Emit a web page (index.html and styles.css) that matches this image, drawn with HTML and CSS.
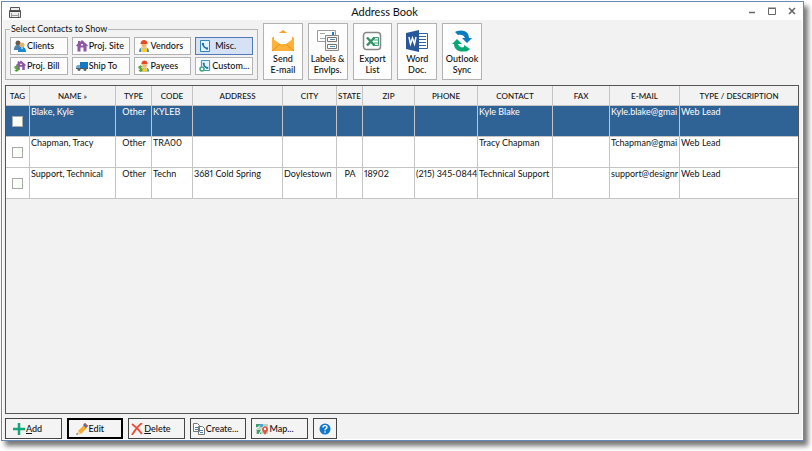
FILE: index.html
```html
<!DOCTYPE html>
<html lang="en">
<head>
<meta charset="utf-8">
<title>Address Book</title>
<link rel="stylesheet" href="styles.css">
</head>
<body>
<svg class="defs" aria-hidden="true">
  <symbol id="house" viewBox="0 0 12 12"><path fill="#8e56a3" d="M6 0 12 5.500 11 6.500 10.500 6v5.500h-3V7.500h-3v4h-3V6L1 6.500 0 5.500l2-2V1h2v1z"/><path fill="#fff" d="M5 4h2v1.500H5z"/></symbol>
  <symbol id="person" viewBox="0 0 12 12"><path fill="#e64b25" d="M2.500 4C2.500 1.500 4 0 6 0s3.500 1.500 3.500 4z"/><path fill="#f8b56c" d="M3.500 4h5v1.500C8.500 7 7 8 6 8S3.500 7 3.500 5.500z"/><path fill="#3d8bd0" d="M1 12c0-3 1-4 3-4.500L6 9l2-1.500C10 8 11 9 11 12z"/><path fill="#ffd027" d="M4 7.500 6 9.500 8 7.500 9 8v4H3V8z"/></symbol>
  <symbol id="phonebook" viewBox="0 0 12 12"><path fill="#e0f1fb" stroke="#3387b5" d="M1.500.5h9v11h-9z"/><path fill="none" stroke="#246da3" stroke-width="1.600" d="M4 4c0 2 2 4.500 4.500 4.500"/><path fill="#246da3" d="M3 3h2v2H3zM7 7.500h2v2H7z"/></symbol>
  <symbol id="dollar" viewBox="0 0 6 8"><path fill="none" stroke="#55a33a" stroke-width="1.500" d="M5 2C3.500 1 1 1.200 1 2.700S5 4 5 5.500 2.500 7 1 6M3 0v8"/></symbol>
</svg>
<main class="window">
  <header class="titlebar">
    <svg class="app-icon" viewBox="0 0 12 11"><path fill="#eee" stroke="#555" d="M1.500.5h9v3h-9zM.5 3.500h11v7H.5z"/><path stroke="#444" d="M1 4.500h10"/><path stroke="#999" d="M2.500 8.500h7M2.500 6v4M9.500 6v4"/></svg>
    <h1>Address Book</h1>
    <nav class="controls" aria-label="Window">
      <button aria-label="Minimize"><svg viewBox="0 0 8 8"><path d="M1 5.500h6" stroke="#666" stroke-width="1.500"/></svg></button>
      <button aria-label="Maximize"><svg viewBox="0 0 8 8"><path d="M.5 1.500h7v6h-7zM0 1h8" fill="none" stroke="#666"/></svg></button>
      <button aria-label="Close"><svg viewBox="0 0 8 8"><path d="m1 1 6 6M7 1 1 7" stroke="#666" stroke-width="1.600"/></svg></button>
    </nav>
  </header>
  <div class="content">
    <section class="toolbar">
      <fieldset>
        <legend>Select Contacts to Show</legend>
        <div class="filters">
          <button><svg viewBox="0 0 12 12"><circle cx="4" cy="3" r="2.500" fill="#685b4b"/><path fill="#4e80ac" d="M0 10c0-4 1.500-5 4-5s4 1 4 5z"/><circle cx="8" cy="5" r="2.500" fill="#e2b463"/><path fill="#1989d1" d="M4 12c0-4 2-5 4-5s4 1 4 5z"/><path fill="#fff" d="m7 7.500 1 2 1-2z"/></svg>Clients</button>
          <button><svg><use href="#house"/></svg>Proj. Site</button>
          <button><svg><use href="#person"/></svg>Vendors</button>
          <button class="active"><svg><use href="#phonebook"/></svg>Misc.</button>
          <button><svg viewBox="0 0 12 12"><use href="#house" x="2" width="10" height="11"/><use href="#dollar" y="5" width="5" height="7"/></svg>Proj. Bill</button>
          <button><svg viewBox="0 0 12 12"><path fill="#1479be" d="M4 2h8v6H4z"/><path fill="#77a8cc" d="M1 5h3v4H0V7z"/><path fill="#4c5963" d="M0 8h12v1H0z"/><circle cx="3" cy="9.500" r="1.500" fill="#566"/><circle cx="9" cy="9.500" r="1.500" fill="#566"/></svg>Ship To</button>
          <button><svg viewBox="0 0 12 12"><use href="#person" x="1" width="11" height="12"/><use href="#dollar" y="5" width="5" height="7"/></svg>Payees</button>
          <button><svg viewBox="0 0 12 12"><use href="#phonebook" x="1" width="11" height="11"/><circle cx="3" cy="9" r="2" fill="#fff" stroke="#3aa783" stroke-width="1.500"/></svg>Custom...</button>
        </div>
      </fieldset>
      <div class="actions">
        <button><svg viewBox="0 0 24 24"><path fill="#f3a32b" d="M1 9 12 1l11 8v13H1z"/><path fill="#fff" d="M3 4h18v8l-5 4H8l-5-4z"/><path fill="#ffb13a" d="m1 9 8 6h6l8-6v13H1z"/><path stroke="#e78f16" d="m1 22 8-7M23 22l-8-7"/></svg><span>Send<br>E-mail</span></button>
        <button><svg viewBox="0 0 24 24"><path fill="#fff" stroke="#999" d="M1.500 1.500h18v11h-18z"/><path stroke="#aaa" d="M4 4.500h5M4 9.500h5"/><path fill="#2878bd" d="M16 3h2v3h-2z"/><path fill="#f5f5f5" stroke="#888" d="M9.500 6.500h13v15h-13z"/><path fill="#fff" stroke="#777" d="M11.500 8.500h9v4h-9zM11.500 15.500h9v4h-9z"/><path stroke="#4e88bb" d="M14 10.500h5M14 17.500h5"/></svg><span>Labels &amp;<br>Envlps.</span></button>
        <button><svg viewBox="0 0 24 24"><rect x="3.500" y="3.500" width="17" height="17" rx="3" fill="#fff" stroke="#888" stroke-width="1.500"/><path fill="none" stroke="#38a274" d="M13 8.500h5.500v8H13M14 11h5M14 14h5"/><path stroke="#319366" stroke-width="2.500" d="m7 8.500 7.500 8M14.500 8.500l-7.500 8"/></svg><span>Export<br>List</span></button>
        <button><svg viewBox="0 0 24 24"><path fill="#fff" stroke="#3260a3" d="M12.500 4.500h10v15h-10z"/><path stroke="#3260a3" d="M14 7.500h7M14 10.500h7M14 13.500h7M14 16.500h7"/><path fill="#28569a" d="M1 4 14 1v22L1 20z"/><path fill="none" stroke="#fff" stroke-width="1.500" d="m4 8 1.500 7L7.500 9l2 6L11 8"/></svg><span>Word<br>Doc.</span></button>
        <button><svg viewBox="0 0 24 24"><path fill="#087bc1" d="M7 2c7-2 12 1 12 7h3l-5 5-5-5h3c-1-3-4-4-7-3L5 3z"/><path fill="#08a875" d="M17 22C10 24 4 21 4 15H2l5-5 5 5H8c1 3 4 4 6 3v-2l6 4-5 4z"/></svg><span>Outlook<br>Sync</span></button>
      </div>
    </section>
    <section class="grid">
      <table>
        <colgroup><col class="w-tag"><col class="w-name"><col class="w-type"><col class="w-code"><col class="w-address"><col class="w-city"><col class="w-state"><col class="w-zip"><col class="w-phone"><col class="w-contact"><col class="w-fax"><col class="w-email"><col></colgroup>
        <thead><tr><th>TAG</th><th>NAME »</th><th>TYPE</th><th>CODE</th><th>ADDRESS</th><th>CITY</th><th>STATE</th><th>ZIP</th><th>PHONE</th><th>CONTACT</th><th>FAX</th><th>E-MAIL</th><th>TYPE / DESCRIPTION</th></tr></thead>
        <tbody>
          <tr class="selected"><td class="tag"><input type="checkbox" aria-label="Tag Blake, Kyle"></td><td>Blake, Kyle</td><td class="mid">Other</td><td>KYLEB</td><td></td><td></td><td></td><td></td><td></td><td>Kyle Blake</td><td></td><td>Kyle.blake@gmai</td><td>Web Lead</td></tr>
          <tr><td class="tag"><input type="checkbox" aria-label="Tag Chapman, Tracy"></td><td>Chapman, Tracy</td><td class="mid">Other</td><td>TRA00</td><td></td><td></td><td></td><td></td><td></td><td>Tracy Chapman</td><td></td><td>Tchapman@gmai</td><td>Web Lead</td></tr>
          <tr><td class="tag"><input type="checkbox" aria-label="Tag Support, Technical"></td><td>Support, Technical</td><td class="mid">Other</td><td>Techn</td><td>3681 Cold Spring</td><td>Doylestown</td><td class="mid">PA</td><td>18902</td><td>(215) 345-0844</td><td>Technical Support</td><td></td><td>support@designr</td><td>Web Lead</td></tr>
        </tbody>
      </table>
    </section>
    <footer>
      <div class="commands">
        <button class="roomy"><svg viewBox="0 0 12 12"><path stroke="#13a67a" stroke-width="2.500" d="M6 0v12M0 6h12"/></svg><span><u>A</u>dd</span></button>
        <button class="roomy default"><svg viewBox="0 0 12 12"><path fill="#f4aa33" d="m2 8 6-6 3 3-6 6z"/><path fill="#2d75bd" d="m7 2 2-2 3 3-2 2z"/><path fill="#e34c34" d="m8 1 1-1 3 3-1 1z"/><path fill="#efcf9c" d="m2 8 3 3-4 1z"/><path fill="#444" d="m1 10 1 1-2 1z"/></svg><span>Edit</span></button>
        <button><svg viewBox="0 0 12 12"><path fill="none" stroke="#ed4b31" stroke-width="1.800" d="M1 1c3 2 7 6 10 10M11 0C7 3 4 7 1 12"/></svg><span><u>D</u>elete</span></button>
        <button><svg viewBox="0 0 12 12"><path fill="#fff" stroke="#777" d="M.5.5h4l2 2v6h-6zM5.500 3.500h4l2 2v6h-6z"/><path stroke="#3f82bd" d="M2 4.500h3M2 6.500h3M7 7.500h3M7 9.500h3"/></svg><span>Create...</span></button>
        <button class="mapping"><svg viewBox="0 0 12 12"><path fill="#b9d6c0" d="M0 1h12v10H0z"/><path fill="#3f9e70" d="M0 1h4v3H0zM1 7h4v4H1z"/><path stroke="#fff" d="m0 6 6-5M3 11l5-8"/><path fill="#55a5d4" d="M4 1h3v3H4z"/><path fill="#e8523a" d="M9 12 6 7c0-5 6-5 6 0z"/><circle cx="9" cy="6" r="1.200" fill="#fff"/></svg><span>Map...</span></button>
      </div>
      <button class="help" aria-label="Help"><svg viewBox="0 0 12 12"><circle cx="6" cy="6" r="5.500" fill="#1177cc"/><path fill="none" stroke="#fff" stroke-width="1.400" d="M4 4.500C4 2 8 2 8 4.300 8 5.500 6 5.500 6 7.200M6 8.300v1.400"/></svg></button>
    </footer>
  </div>
</main>
</body>
</html>
```
FILE: styles.css
```css
* { box-sizing: border-box; }
body {
  margin: 0;
  padding: 1px 8px 10px 1px;
  min-height: 100vh;
  display: flex;
  background: #fff;
  color: #111;
  font: 9px/12px Lato, sans-serif;
}
.defs { position: absolute; width: 0; height: 0; }
button {
  margin: 0;
  padding: 0;
  font: inherit;
  font-weight: 500;
  color: inherit;
  border: 1px solid #b2b2b2;
  background: #fdfdfd;
}
.window {
  flex: 1;
  min-width: 0;
  display: flex;
  flex-direction: column;
  border: 1px solid #6688bb;
  background: #fff;
  box-shadow: 4px 5px 5px #777;
}
.titlebar {
  height: 18px;
  display: grid;
  grid-template-columns: 1fr auto 1fr;
  align-items: center;
  padding: 0 7px 0 7px;
}
.titlebar h1 {
  margin: 0;
  padding: 2px 36px 0 0;
  font: 11px/16px Lato, sans-serif;
}
.app-icon { width: 12px; height: 11px; margin-top: 2px; }
.controls { display: flex; justify-content: flex-end; gap: 12px; }
.controls button { display: flex; border: 0; background: none; }
.controls svg { width: 8px; height: 8px; }
.content {
  flex: 1;
  display: flex;
  flex-direction: column;
  margin: 0 1px 1px;
  padding: 3px 2px 0;
  background: #f2f2f2;
}
.toolbar { display: flex; gap: 5px; height: 57px; }
fieldset {
  width: 253px;
  margin: 0;
  padding: 2px 4px;
  border: 1px solid #b5b5b5;
}
legend { margin-left: 0; padding: 0 1px; }
.filters {
  display: grid;
  grid-template-columns: repeat(4, 1fr);
  grid-auto-rows: 18px;
  gap: 2px 4px;
}
.filters button {
  display: flex;
  align-items: center;
  gap: 1px;
  padding-left: 3px;
  white-space: nowrap;
}
.filters svg { width: 12px; height: 12px; flex: none; }
.filters .active { background: #d5e1f4; border-color: #5279b6; gap: 4px; }
.actions {
  width: 219px;
  display: grid;
  grid-template-columns: repeat(5, 1fr);
  gap: 5px;
}
.actions button {
  display: flex;
  flex-direction: column;
  align-items: center;
  padding-top: 5px;
  line-height: 11px;
  white-space: nowrap;
}
.actions svg { width: 24px; height: 24px; }
.grid {
  flex: 1;
  margin: 5px 1px 4px 0;
  border: 1px solid #555;
}
table { width: 100%; table-layout: fixed; border-collapse: separate; border-spacing: 0; }
th, td {
  padding: 0 0 0 1px;
  border-right: 1px solid #c4c4c4;
  border-bottom: 1px solid #c4c4c4;
  overflow: hidden;
  white-space: nowrap;
  text-align: left;
  vertical-align: top;
  font-weight: 400;
}
th { height: 20px; padding: 0; font-size: 8px; font-weight: 500; text-align: center; vertical-align: middle; }
td { height: 31px; background: #fff; line-height: 11px; font-variant-numeric: proportional-nums; }
th:last-child, td:last-child { border-right: 0; }
.mid { text-align: center; }
.tag { padding: 0; text-align: center; vertical-align: middle; }
.selected td { background: #2f6395; color: #fff; }
.tag input {
  appearance: none;
  display: block;
  width: 11px;
  height: 11px;
  margin: 0 auto;
  border: 1px solid #aaa;
  background: #fafff8;
}
.w-tag { width: 24px; }
.w-name { width: 86px; }
.w-type { width: 36px; }
.w-code { width: 41px; }
.w-address { width: 90px; }
.w-city { width: 54px; }
.w-state { width: 26px; }
.w-zip { width: 52px; }
.w-phone { width: 63px; }
.w-contact { width: 75px; }
.w-fax { width: 57px; }
.w-email { width: 70px; }
footer { display: flex; gap: 5px; height: 21px; }
.commands { width: 303px; display: grid; grid-template-columns: repeat(5, 1fr); gap: 5px; }
footer button {
  display: flex;
  align-items: center;
  gap: 1px;
  padding-left: 2px;
  border-color: #444;
  background: #f4f4f4;
}
footer svg { width: 12px; height: 12px; }
footer .roomy { padding-left: 7px; }
footer .mapping { padding-left: 4px; }
footer .default { border: 2px solid #000; }
footer .help { width: 24px; padding: 0; justify-content: center; }
```
